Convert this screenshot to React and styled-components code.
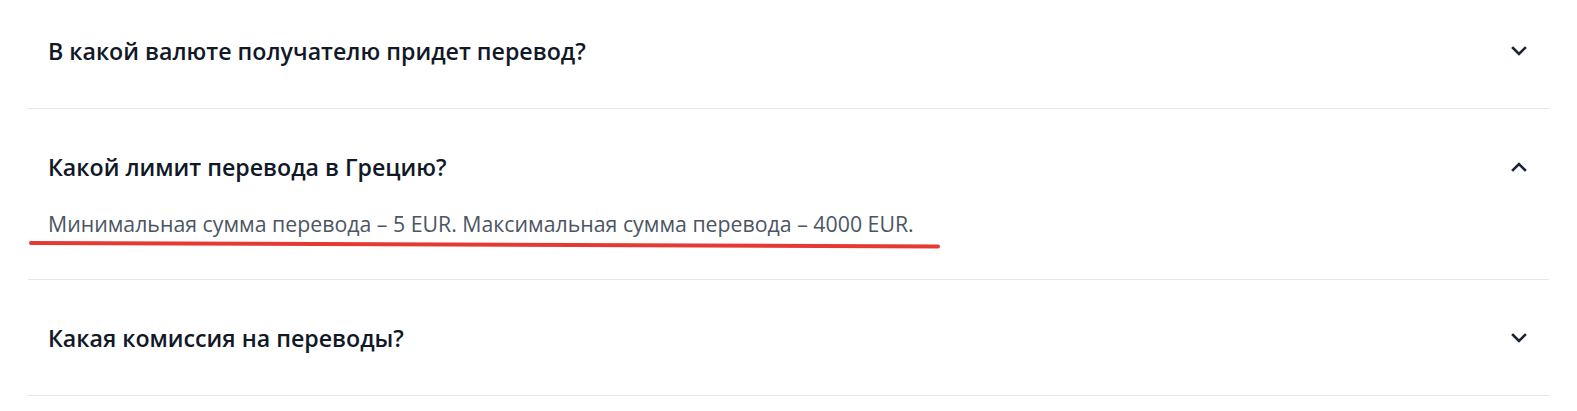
import React, { useState } from "react";
import styled, { createGlobalStyle } from "styled-components";

const GlobalStyle = createGlobalStyle`
  html, body {
    margin: 0;
    padding: 0;
    background: #ffffff;
  }
  body {
    font-family: "Open Sans", "Noto Sans", "Liberation Sans", sans-serif;
  }
`;

const faq = [
  {
    q: "В какой валюте получателю придет перевод?",
    a: "Перевод будет зачислен получателю в евро (EUR).",
  },
  {
    q: "Какой лимит перевода в Грецию?",
    a: "Минимальная сумма перевода – 5 EUR. Максимальная сумма перевода – 4000 EUR.",
    marked: true,
  },
  {
    q: "Какая комиссия на переводы?",
    a: "Комиссия зависит от суммы и способа перевода.",
  },
];

export default function App() {
  const [open, setOpen] = useState(1);

  return (
    <Page>
      <GlobalStyle />
      <List>
        {faq.map((item, i) => (
          <Item key={item.q}>
            <Question onClick={() => setOpen(open === i ? -1 : i)}>
              <QuestionText>{item.q}</QuestionText>
              <Chevron $open={open === i} />
            </Question>
            {open === i && <Answer>{item.a}</Answer>}
            {open === i && item.marked && <Scribble />}
          </Item>
        ))}
      </List>
    </Page>
  );
}

function Chevron({ $open }) {
  return (
    <ChevronBox $open={$open}>
      <svg width="16" height="10" viewBox="0 0 16 10" fill="none">
        <path
          d="M2 2l6 6 6-6"
          stroke="#1b2336"
          strokeWidth="2.6"
          strokeLinecap="square"
          strokeLinejoin="miter"
        />
      </svg>
    </ChevronBox>
  );
}

// hand-drawn red underline over the answer
function Scribble() {
  return (
    <ScribbleSvg width="916" height="10" viewBox="0 0 916 10" fill="none">
      <path
        d="M3 3 C 200 3.5, 500 4.5, 910 6.5"
        stroke="#e53a33"
        strokeWidth="4"
        strokeLinecap="round"
      />
    </ScribbleSvg>
  );
}

const Page = styled.div`
  width: 100%;
  padding: 0 28px;
  box-sizing: border-box;
`;

const List = styled.div`
  display: flex;
  flex-direction: column;
`;

const Item = styled.div`
  position: relative;
  border-bottom: 1px solid #e5e7eb;
  padding: 44px 22px 43px 20px;
  &:first-child {
    padding-top: 37px;
  }
`;

const Question = styled.div`
  display: flex;
  align-items: center;
  justify-content: space-between;
  cursor: pointer;
`;

const QuestionText = styled.h3`
  margin: 0;
  font-size: 23.2px;
  line-height: 28px;
  font-weight: 600;
  color: #111827;
`;

const ChevronBox = styled.span`
  display: flex;
  width: 16px;
  height: 10px;
  transform: ${(p) => (p.$open ? "rotate(180deg)" : "none")};
`;

const Answer = styled.p`
  margin: 29px 0 -2px;
  font-size: 21.3px;
  line-height: 28px;
  font-weight: 400;
  color: #4b5563;
`;

const ScribbleSvg = styled.svg`
  position: absolute;
  left: 0;
  top: 131px;
`;
